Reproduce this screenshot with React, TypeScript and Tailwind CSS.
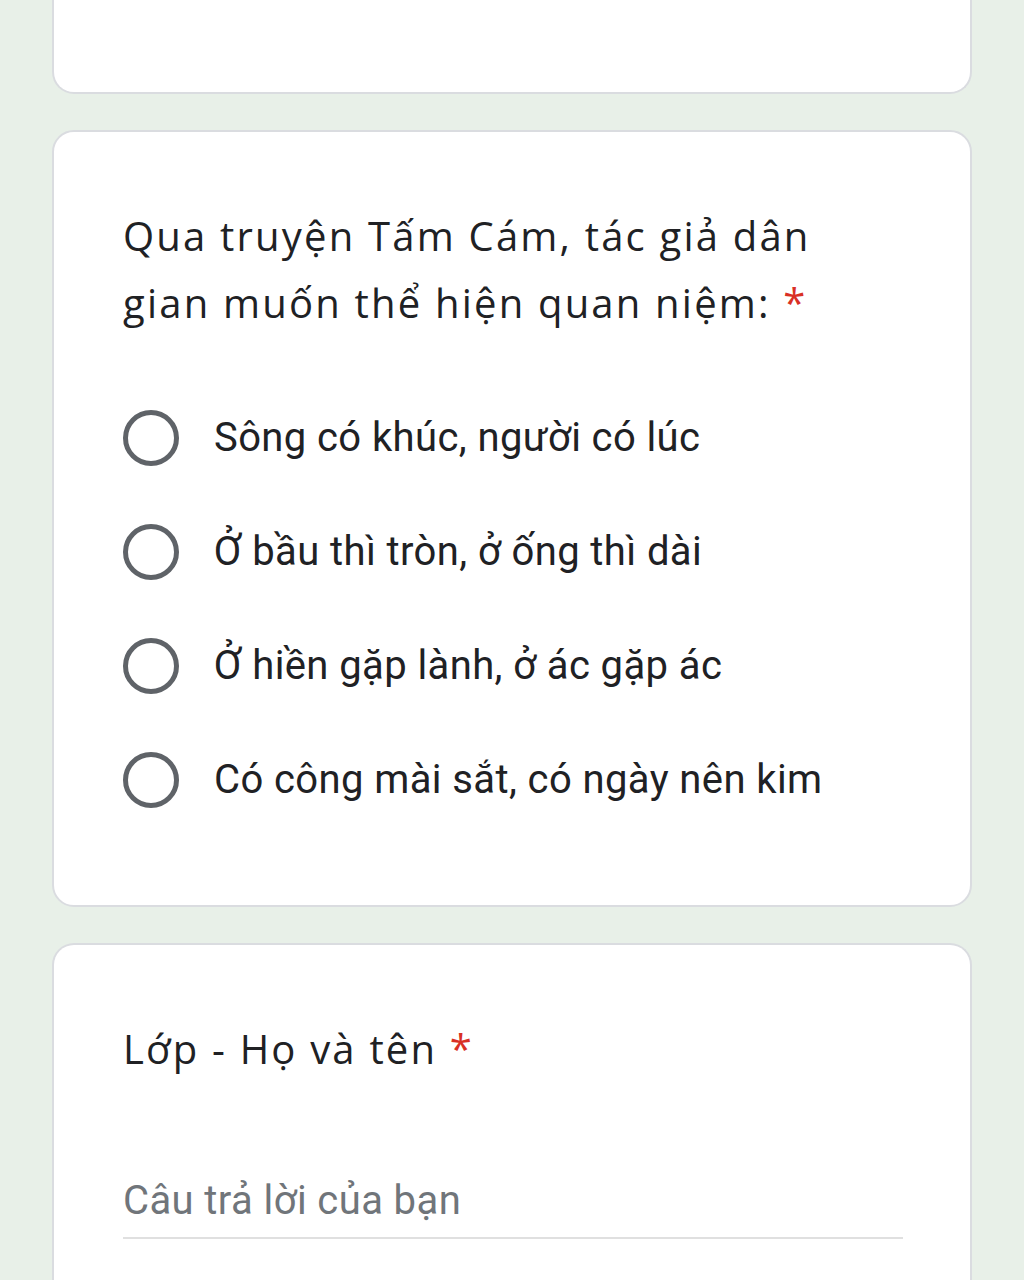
import { useState } from "react";

const OPTIONS = [
  "Sông có khúc, người có lúc",
  "Ở bầu thì tròn, ở ống thì dài",
  "Ở hiền gặp lành, ở ác gặp ác",
  "Có công mài sắt, có ngày nên kim",
];

function Radio({ checked }: { checked: boolean }) {
  return (
    <span className="grid h-[56px] w-[56px] shrink-0 place-items-center rounded-full border-[5px] border-[#5f6368]">
      {checked && <span className="h-[26px] w-[26px] rounded-full bg-[#1a73e8]" />}
    </span>
  );
}

export default function App() {
  const [selected, setSelected] = useState<number | null>(null);
  const [name, setName] = useState("");

  return (
    <div className="min-h-[1280px] overflow-hidden bg-[#e8f0e8] px-[52px] font-['Roboto',sans-serif]">
      {/* previous card, cut off at the top */}
      <div className="h-[94px] rounded-b-[22px] border-2 border-t-0 border-[#dadce0] bg-white" />

      <section className="mt-[36px] rounded-[22px] border-2 border-[#dadce0] bg-white px-[69px] pb-[68px] pt-[70px]">
        <h2 className="font-['Open_Sans',sans-serif] text-[40px] leading-[67px] tracking-[2.2px] text-[#202124]">
          Qua truyện Tấm Cám, tác giả dân
          <br />
          gian muốn thể hiện quan niệm: <span className="text-[#d93025]">*</span>
        </h2>

        <div className="mt-[45px]">
          {OPTIONS.map((opt, i) => (
            <button
              key={opt}
              type="button"
              onClick={() => setSelected(i)}
              className="flex h-[114px] w-full items-center gap-[35px] text-left"
            >
              <Radio checked={selected === i} />
              <span className="text-[40px] tracking-[0.4px] text-[#202124]">{opt}</span>
            </button>
          ))}
        </div>
      </section>

      <section className="mt-[36px] rounded-t-[22px] border-2 border-b-0 border-[#dadce0] bg-white px-[69px] pb-[60px] pt-[70px]">
        <h2 className="font-['Open_Sans',sans-serif] text-[40px] leading-[67px] tracking-[2.2px] text-[#202124]">
          Lớp - Họ và tên <span className="text-[#d93025]">*</span>
        </h2>

        <input
          value={name}
          onChange={(e) => setName(e.target.value)}
          placeholder="Câu trả lời của bạn"
          className="mt-[93px] block w-[780px] border-b-2 border-[#e0e0e0] pb-[10px] text-[40px] leading-[52px] tracking-[0.4px] text-[#202124] outline-none placeholder:text-[#70757a]"
        />
      </section>
    </div>
  );
}
